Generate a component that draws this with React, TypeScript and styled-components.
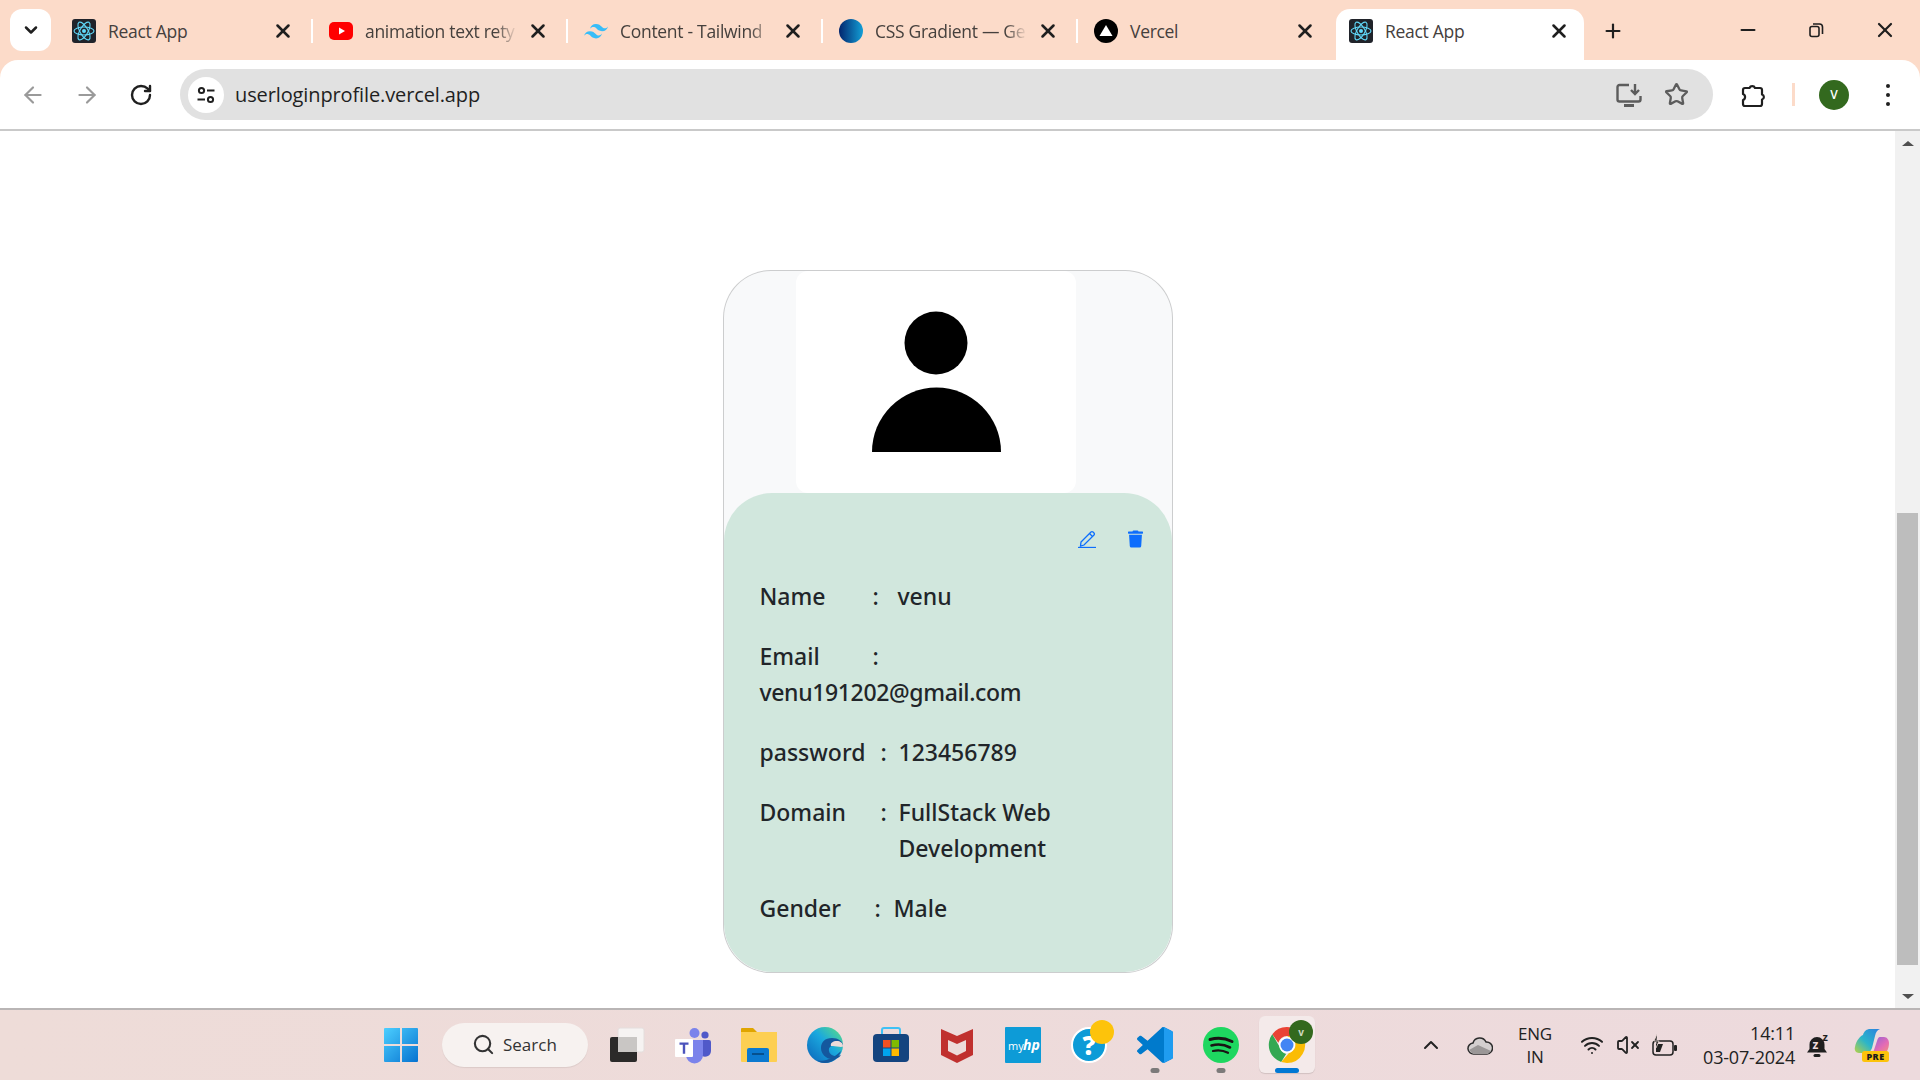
import React from "react";
import styled, { createGlobalStyle } from "styled-components";
import { ArrowLeft, ArrowRight, RotateCw, Star, Plus, Minus, X, Search, ChevronUp, ChevronDown, VolumeX, Wifi } from "lucide-react";
import { FaTrash } from "react-icons/fa";

const Global = createGlobalStyle`
  html, body { margin: 0; padding: 0; background: #fff; }
  * { box-sizing: border-box; }
  #root { width: 1920px; height: 1080px; overflow: hidden; }
`;
const UI = `"Open Sans", "Noto Sans", sans-serif`;

const Screen = styled.div`
  width: 1920px; height: 1080px; display: flex; flex-direction: column; font-family: ${UI}; color: #212529; background: #fcdbc9;
`;
const TabStrip = styled.div`
  height: 60px; display: flex; align-items: flex-end; padding-left: 10px; flex: none;
`;
const TabSwitcher = styled.div`
  width: 41px; height: 42px; background: #fff; border-radius: 12px; display: flex; align-items: center; justify-content: center; margin-bottom: 9px; margin-right: 6px; color: #1f1f1f; flex: none;
`;
const Tab = styled.div<{ $active?: boolean; $w?: number }>`
  width: ${p => p.$w ?? 255}px; height: 51px; flex: none; display: flex; align-items: center;
  padding: ${p => (p.$active ? "0 14px 8px 13px" : "0 1px 8px 15px")};
  background: ${p => (p.$active ? "#fff" : "transparent")};
  border-radius: ${p => (p.$active ? "14px 14px 0 0" : "0")};
`;
const TabIcon = styled.svg`
  width: 24px; height: 24px; flex: none; margin-right: 12px;
`;
const TabTitle = styled.div<{ $fade?: boolean }>`
  flex: 1; min-width: 0; white-space: nowrap; font-size: 17.5px; letter-spacing: -0.3px; color: #45403d;
  ${p => p.$fade ? "-webkit-mask-image: linear-gradient(90deg, #000 86%, transparent 100%); mask-image: linear-gradient(90deg, #000 86%, transparent 100%);" : ""}
`;
const TabClose = styled(X)`
  width: 22px; height: 22px; margin-left: 10px; flex: none; color: #1f1f1f; stroke-width: 2.8;
`;
const TabSep = styled.div<{ $hide?: boolean }>`
  width: 2px; height: 24px; margin-left: 17px; flex: none; background: ${p => (p.$hide ? "transparent" : "#fff")};
`;
const NewTab = styled(Plus)`
  width: 22px; height: 22px; margin: 0 0 18px 18px; color: #1f1f1f; stroke-width: 2.4; flex: none;
`;
const WindowControls = styled.div`
  margin-left: auto; display: flex; align-self: flex-start; height: 60px; align-items: center; padding: 0 23px 0 0; gap: 49px;
`;
const Toolbar = styled.div`
  height: 71px; flex: none; background: #fff; border-bottom: 2px solid #c9c9c9; border-radius: 18px 18px 0 0; display: flex; align-items: flex-start; padding: 9px 0 0 20px;
`;
const NavBtn = styled.div<{ $mr: number; $c: string }>`
  width: 26px; height: 51px; flex: none; margin-right: ${p => p.$mr}px; display: flex; align-items: center; justify-content: center; color: ${p => p.$c};
`;
const Omnibox = styled.div`
  width: 1533px; height: 51px; flex: none; background: #e1e1e1; border-radius: 26px; display: flex; align-items: center; padding: 0 24px 0 8px;
`;
const SiteInfo = styled.div`
  width: 36px; height: 36px; border-radius: 50%; background: #fff; display: flex; align-items: center; justify-content: center; flex: none;
`;
const Url = styled.div`
  margin-left: 11px; font-size: 20px; letter-spacing: -0.12px; color: #1f1f1f; flex: 1;
`;
const OmniIcons = styled.div`
  display: flex; align-items: center; gap: 22px; color: #5c5c5c;
`;
const ToolbarEnd = styled.div`
  display: flex; align-items: center; height: 51px; margin-left: 27px;
`;
const VSep = styled.div`
  width: 3px; height: 23px; background: #fcdbc9; margin: 0 24px 0 26px;
`;
const Avatar = styled.div`
  width: 30px; height: 30px; border-radius: 50%; background: #33691e; color: #fff; font-size: 12px; font-weight: 600; display: flex; align-items: center; justify-content: center; margin-right: 36px;
`;
const Viewport = styled.div`
  flex: 1; min-height: 0; display: flex; background: #fff;
`;
const Page = styled.main`
  flex: 1; display: flex; justify-content: center; align-items: flex-start; padding-top: 139px;
`;
const Card = styled.section`
  width: 450px; height: 703px; background: #f8f9fa; border: 1px solid rgba(0,0,0,.175); border-radius: 48px; display: flex; flex-direction: column; overflow: hidden; flex: none;
`;
const Photo = styled.div`
  width: 280px; height: 222px; flex: none; margin-left: 72px; background: #fff; border-radius: 12px;
`;
const PhotoSvg = styled.svg`
  display: block; width: 280px; height: 222px;
`;
const CardBody = styled.div`
  flex: 1; background: #d1e7dd; border-radius: 48px; padding: 37px 29px 0 36px; font-family: "Noto Sans", "Open Sans", sans-serif; font-size: 23px; font-weight: 500; line-height: 36px;
`;
const Actions = styled.div`
  display: flex; justify-content: flex-end; align-items: center; gap: 32px; height: 18px; margin-bottom: 30px; color: #0d6efd;
`;
const PencilSvg = styled.svg`
  width: 18px; height: 18px;
`;
const Trash = styled(FaTrash)`
  width: 15px; height: 18px;
`;
const Row = styled.div<{ $wrap?: boolean }>`
  display: flex; flex-wrap: ${p => (p.$wrap ? "wrap" : "nowrap")}; margin-bottom: 24px;
`;
const Label = styled.span<{ $w: number }>`
  width: ${p => p.$w}px; flex: none;
`;
const Colon = styled.span<{ $w: number }>`
  width: ${p => p.$w}px; flex: none;
`;
const Value = styled.span<{ $tight?: boolean }>`
  flex: 0 1 auto; min-width: 0; letter-spacing: ${p => (p.$tight ? "-0.36px" : "0")};
`;
const Scrollbar = styled.aside`
  width: 25px; flex: none; background: #f1f1f1; display: flex; flex-direction: column; align-items: center;
`;
const Arrow = styled.div<{ $down?: boolean }>`
  height: 24px; flex: none; display: flex; align-items: center; justify-content: center;
  &::before { content: ""; border-left: 6px solid transparent; border-right: 6px solid transparent;
    ${p => (p.$down ? "border-top: 5px solid #505050;" : "border-bottom: 5px solid #505050;")} }
`;
const ScrollSpace = styled.div`
  flex: 1;
`;
const Thumb = styled.div`
  width: 21px; height: 452px; background: #bdbdbd; flex: none; margin-bottom: 19px;
`;
const Taskbar = styled.footer`
  height: 72px; flex: none; border-top: 2px solid #b9b5b5; background: linear-gradient(90deg, #eedcd8, #eddadd); display: flex; align-items: center; padding: 0 0 1px 373px; color: #222;
`;
const Slot = styled.div<{ $active?: boolean; $mr?: number }>`
  position: relative; width: 56px; height: 57px; flex: none; margin-right: ${p => p.$mr ?? 10}px; display: flex; align-items: center; justify-content: center; border-radius: 6px;
  ${p => (p.$active ? "background: #f4eaea; box-shadow: 0 1px 1px rgba(0,0,0,.12);" : "")}
`;
const Running = styled.span<{ $active?: boolean }>`
  position: absolute; bottom: 0; left: 50%; transform: translateX(-50%); height: 5px; border-radius: 3px;
  width: ${p => (p.$active ? 24 : 9)}px; background: ${p => (p.$active ? "#0078d4" : "#7c7a7a")};
`;
const AppSvg = styled.svg`
  width: 36px; height: 36px; display: block; overflow: visible;
`;
const SearchPill = styled.div`
  width: 146px; height: 44px; flex: none; margin-right: 11px; border-radius: 22px; background: #f7f2f0; box-shadow: 0 1px 1px rgba(0,0,0,.08); display: flex; align-items: center; padding-left: 30px; gap: 8px; font-size: 17px; color: #333;
`;
const Tray = styled.div`
  margin-left: auto; display: flex; align-items: center; height: 100%;
`;
const TrayIcon = styled.div<{ $ml: number }>`
  margin-left: ${p => p.$ml}px; display: flex; align-items: center; color: #222; flex: none;
`;
const Lang = styled.div`
  margin-left: 17px; width: 50px; text-align: center; font-size: 17px; line-height: 23px; flex: none; letter-spacing: -0.2px;
`;
const Clock = styled.div`
  width: 117px; text-align: right; font-size: 18px; line-height: 24px; flex: none; letter-spacing: -0.2px;
`;

const ReactIcon = () => (
  <TabIcon viewBox="0 0 24 24">
    <rect width="24" height="24" rx="3" fill="#20232a" />
    <g fill="none" stroke="#61dafb" strokeWidth="1.1">
      <ellipse cx="12" cy="12" rx="10" ry="4" />
      <ellipse cx="12" cy="12" rx="10" ry="4" transform="rotate(60 12 12)" />
      <ellipse cx="12" cy="12" rx="10" ry="4" transform="rotate(120 12 12)" />
    </g>
    <circle cx="12" cy="12" r="2" fill="#61dafb" />
  </TabIcon>
);
const YoutubeIcon = () => (
  <TabIcon viewBox="0 0 24 24">
    <rect y="3" width="24" height="18" rx="5" fill="#f00" />
    <path d="M10 8.5v7l6-3.5z" fill="#fff" />
  </TabIcon>
);
const TailwindIcon = () => (
  <TabIcon viewBox="0 0 24 24">
    <path fill="#38bdf8" d="M12 5c-3.2 0-5.2 1.6-6 4.8 1.2-1.6 2.6-2.2 4.2-1.8.9.2 1.6.9 2.3 1.6 1.2 1.2 2.5 2.6 5.5 2.6 3.2 0 5.2-1.6 6-4.8-1.2 1.6-2.6 2.2-4.2 1.8-.9-.2-1.6-.9-2.3-1.6C16.3 6.4 15 5 12 5zM6 12.2c-3.2 0-5.2 1.6-6 4.8 1.2-1.6 2.6-2.2 4.2-1.8.9.2 1.6.9 2.3 1.6C7.7 18 9 19.4 12 19.4c3.2 0 5.2-1.6 6-4.8-1.2 1.6-2.6 2.2-4.2 1.8-.9-.2-1.6-.9-2.3-1.6-1.2-1.2-2.5-2.6-5.5-2.6z" />
  </TabIcon>
);
const GradientIcon = () => (
  <TabIcon viewBox="0 0 24 24">
    <defs>
      <linearGradient id="cssg" x1="0" x2="1" y1="0" y2="0">
        <stop offset="0" stopColor="#02256e" />
        <stop offset="1" stopColor="#139fd6" />
      </linearGradient>
    </defs>
    <circle cx="12" cy="12" r="12" fill="url(#cssg)" />
  </TabIcon>
);
const VercelIcon = () => (
  <TabIcon viewBox="0 0 24 24">
    <circle cx="12" cy="12" r="12" fill="#000" />
    <path d="M12 6l6.5 11h-13z" fill="#fff" />
  </TabIcon>
);

const RestoreIcon = () => (
  <svg width="16" height="16" viewBox="0 0 16 16" fill="none" stroke="#1f1f1f" strokeWidth="1.6">
    <rect x="2" y="4.5" width="9" height="10" rx="2" />
    <path d="M5 2h6.5a3 3 0 0 1 3 3v7" />
  </svg>
);
const TuneIcon = () => (
  <svg width="20" height="20" viewBox="0 0 20 20" fill="none" stroke="#1f1f1f" strokeWidth="2">
    <circle cx="5.5" cy="5.5" r="2.6" />
    <path d="M11 5.5h7.500M1.500 14.500h7.500" />
    <circle cx="14.5" cy="14.5" r="2.6" />
  </svg>
);
const InstallIcon = () => (
  <svg width="26" height="24" viewBox="0 0 26 24" fill="none" stroke="#5c5c5c" strokeWidth="2.4">
    <path d="M13 2H3.500A2 2 0 0 0 1.500 4v12.500a2 2 0 0 0 2 2h19a2 2 0 0 0 2-2V13" />
    <path d="M8 22.500h10" strokeWidth="3" />
    <path d="M19 1v9.500M15 7l4 4 4-4" />
  </svg>
);
const ExtensionIcon = () => (
  <svg width="26" height="26" viewBox="0 0 26 26" fill="none" stroke="#1f1f1f" strokeWidth="2.2" strokeLinejoin="round">
    <path d="M5 6h4.500a3 3 0 0 1 5.500 0h5a2 2 0 0 1 2 2v4.500a2.600 2.600 0 0 1 0 5V22a2 2 0 0 1-2 2H5a2 2 0 0 1-2-2v-4a3.200 3.200 0 0 0 0-6V8a2 2 0 0 1 2-2z" />
  </svg>
);
const MenuDots = () => (
  <svg width="6" height="24" viewBox="0 0 6 24" fill="#1f1f1f">
    <circle cx="3" cy="3" r="2" /><circle cx="3" cy="12" r="2" /><circle cx="3" cy="21" r="2" />
  </svg>
);

const Win = () => (
  <AppSvg viewBox="0 0 36 36">
    <defs>
      <linearGradient id="w" x1="0" y1="0" x2="1" y2="1"><stop offset="0" stopColor="#4ccfff" /><stop offset="1" stopColor="#0672d0" /></linearGradient>
    </defs>
    <path fill="url(#w)" d="M1 2a1 1 0 0 1 1-1h15v16H1zM19 1h15a1 1 0 0 1 1 1v15H19zM1 19h16v16H2a1 1 0 0 1-1-1zM19 19h16v15a1 1 0 0 1-1 1H19z" />
  </AppSvg>
);
const TaskView = () => (
  <AppSvg viewBox="0 0 36 36">
    <rect x="9" y="1" width="26" height="24" rx="2" fill="#f6f3f2" stroke="#e4dedd" />
    <rect x="1" y="10" width="27" height="25" rx="2" fill="#2b2a29" />
    <rect x="9" y="10" width="19" height="15" fill="#c9c6c4" />
  </AppSvg>
);
const Teams = () => (
  <AppSvg viewBox="0 0 36 36">
    <circle cx="30" cy="8" r="3.6" fill="#5059c9" />
    <path d="M24 13h10a2 2 0 0 1 2 2v9a6 6 0 0 1-9 5z" fill="#5059c9" />
    <circle cx="19.5" cy="6" r="5" fill="#7b83eb" />
    <path d="M11 13h17v15a8.500 8.500 0 0 1-17 0z" fill="#7b83eb" />
    <rect y="12" width="18" height="18" rx="1" fill="#fff" />
    <path d="M4.500 15.500h9v2.300h-3.300v9H7.800v-9H4.500z" fill="#4b53bc" />
  </AppSvg>
);
const Files = () => (
  <AppSvg viewBox="0 0 36 36">
    <path d="M0 2a1 1 0 0 1 1-1h11l4 4h19a1 1 0 0 1 1 1v6H0z" fill="#e0a500" />
    <path d="M0 5h36v29a1 1 0 0 1-1 1H1a1 1 0 0 1-1-1z" fill="#fdcf52" />
    <path d="M6 35v-12a2 2 0 0 1 2-2h18a2 2 0 0 1 2 2v12z" fill="#0b79d0" />
    <rect x="11" y="26" width="12" height="2" fill="#06508e" />
  </AppSvg>
);
const Edge = () => (
  <AppSvg viewBox="0 0 36 36">
    <defs>
      <linearGradient id="e1" x1="0" y1="1" x2="1" y2="0"><stop offset="0" stopColor="#0b62b8" /><stop offset=".55" stopColor="#1aa8de" /><stop offset="1" stopColor="#5fe07f" /></linearGradient>
    </defs>
    <circle cx="18" cy="18" r="18" fill="url(#e1)" />
    <path d="M34 24c-2 7-9 12-16 12-4 0-6-1-8-3 2 1 4 1 7 .5 6-1 11-4 17-9.500z" fill="#14589e" />
    <path d="M36 19c0-5-5-8-11-8-7 0-11 4-11 10 0 6 5 11 11 11 4 0 7-1 9-4-5 2-11 1-12-4-.5-3 1-5 4-5z" fill="#14589e" />
    <path d="M26 19c3 0 10 2 10 0 0-3-3-5-6-5-4 0-7 2-6 5z" fill="#eddbd9" />
  </AppSvg>
);
const Store = () => (
  <AppSvg viewBox="0 0 36 36">
    <path d="M9 9V3a2 2 0 0 1 2-2h14a2 2 0 0 1 2 2v6" fill="none" stroke="#3fc1f5" strokeWidth="2" />
    <rect y="7" width="36" height="28" rx="4" fill="#14447f" />
    <rect x="10" y="13" width="7.500" height="7.500" fill="#f25022" />
    <rect x="18.500" y="13" width="7.500" height="7.500" fill="#7fba00" />
    <rect x="10" y="21.500" width="7.500" height="7.500" fill="#00a4ef" />
    <rect x="18.500" y="21.500" width="7.500" height="7.500" fill="#ffb900" />
  </AppSvg>
);
const McAfee = () => (
  <AppSvg viewBox="0 0 36 36">
    <path d="M2 2l16 7 16-7v26l-16 8-16-8z" fill="#c0302e" />
    <path d="M9 13l9 4 9-4v11l-9 4.500-9-4.500z" fill="#eddbd9" />
  </AppSvg>
);
const MyHP = () => (
  <AppSvg viewBox="0 0 36 36">
    <rect width="36" height="36" rx="1" fill="#0d9bd7" />
    <text x="3" y="23" fontFamily="Open Sans, sans-serif" fontSize="11" fill="#fff">my</text>
    <text x="18" y="23" fontFamily="Open Sans, sans-serif" fontStyle="italic" fontWeight="700" fontSize="14" fill="#fff">hp</text>
  </AppSvg>
);
const Help = () => (
  <AppSvg viewBox="0 0 36 36">
    <circle cx="18" cy="18" r="17" fill="#0d9bd7" stroke="#fff" strokeWidth="2" />
    <text x="18" y="28" textAnchor="middle" fontFamily="Open Sans, sans-serif" fontWeight="800" fontSize="26" fill="#fff">?</text>
    <circle cx="31" cy="5" r="12" fill="#fdc30b" />
  </AppSvg>
);
const VSCode = () => (
  <AppSvg viewBox="0 0 100 100">
    <path fill="#007acc" d="M70.9 99.3c1.6.6 3.4.6 5-.2l20.6-9.9c2.1-1 3.5-3.200 3.500-5.600V16.400c0-2.400-1.400-4.600-3.500-5.600L75.900.9c-2.100-1-4.600-.8-6.400.5-.3.200-.5.400-.7.700L29.400 38 12.200 25c-1.600-1.200-3.800-1.100-5.300.2l-5.500 5c-1.800 1.700-1.800 4.500 0 6.200L16.200 50 1.400 63.600c-1.800 1.600-1.800 4.500 0 6.100l5.500 5c1.500 1.400 3.700 1.500 5.300.3L29.400 62l39.400 35.900c.6.600 1.300 1.100 2.100 1.400zM75 27.300L45.100 50 75 72.700z" />
    <path fill="#1f9cf0" d="M75.800.9l20.700 9.900c2.100 1 3.500 3.200 3.500 5.600v67.200c0 2.400-1.400 4.600-3.500 5.600l-20.600 9.900c-2.400 1.200-5.300.7-7.100-1.200 2.300 2.300 6.200.7 6.200-2.600V4.700c0-3.300-3.900-4.900-6.200-2.600C70.600.2 73.500-.3 75.800.9z" />
  </AppSvg>
);
const Spotify = () => (
  <AppSvg viewBox="0 0 36 36">
    <circle cx="18" cy="18" r="18" fill="#1ed760" />
    <g fill="none" stroke="#191414" strokeLinecap="round">
      <path d="M7 12.500c7-2 15-1.500 22 2" strokeWidth="3" />
      <path d="M8.500 18.500c6-1.600 13-1 18.500 2" strokeWidth="2.600" />
      <path d="M10 24c5-1.200 10-.8 15 1.800" strokeWidth="2.200" />
    </g>
  </AppSvg>
);
const Chrome = () => (
  <AppSvg viewBox="0 0 36 36">
    <path d="M18 0a18 18 0 0 1 15.600 9H18a9 9 0 0 0-8.700 6.800L3.300 7.200A18 18 0 0 1 18 0z" fill="#ea4335" />
    <path d="M3.300 7.200l7.800 13.500a8 8 0 0 0 6 6.200L12.200 35A18 18 0 0 1 3.300 7.200z" fill="#34a853" />
    <path d="M33.600 9a18 18 0 0 1-15.600 27l-5.800-1L20 26a8.500 8.500 0 0 0 5-13l-7-4z" fill="#fbbc04" />
    <circle cx="18" cy="18" r="8" fill="#fff" />
    <circle cx="18" cy="18" r="6.500" fill="#4285f4" />
    <circle cx="32" cy="5" r="12" fill="#33691e" />
    <text x="32" y="9" textAnchor="middle" fontFamily="Open Sans, sans-serif" fontWeight="700" fontSize="10" fill="#cfd8c0">v</text>
  </AppSvg>
);
const CloudIcon = () => (
  <svg width="26" height="22" viewBox="0 0 26 22">
    <path d="M7 20a5.500 5.500 0 0 1-1-11 7 7 0 0 1 13-1 5.500 5.500 0 0 1 1 12z" fill="#d4cfcf" stroke="#2b2b2b" strokeWidth="1.500" />
    <path d="M2 16l9-5 13 6-3 3H6z" fill="#9b9797" />
  </svg>
);
const BatteryIcon = () => (
  <svg width="26" height="24" viewBox="0 0 26 24" fill="none" stroke="#222" strokeWidth="1.500">
    <rect x="1" y="8" width="20" height="14" rx="3" />
    <rect x="22" y="12" width="3" height="6" rx="1" fill="#222" stroke="none" />
    <path d="M4 19v-8h7l-3 8z" fill="#222" stroke="none" />
    <path d="M5 1L2 8h5l-3 7" fill="#222" stroke="#eedcd8" strokeWidth=".8" />
  </svg>
);
const BellIcon = () => (
  <svg width="24" height="26" viewBox="0 0 24 26">
    <path d="M10 5a7.500 7.500 0 0 0-7.500 7.500V17L0 20.500h20L17.500 17v-4.500A7.500 7.500 0 0 0 10 5z" fill="#1f1f1f" />
    <rect x="6.500" y="22" width="7" height="3" rx="1.500" fill="#1f1f1f" />
    <text x="5.500" y="17" fontFamily="Open Sans, sans-serif" fontSize="12" fontWeight="700" fill="#eddbdc">z</text>
    <text x="15.500" y="9" fontFamily="Open Sans, sans-serif" fontSize="11" fontWeight="700" fill="#1f1f1f">z</text>
  </svg>
);
const Copilot = () => (
  <svg width="36" height="36" viewBox="0 0 36 36">
    <defs>
      <linearGradient id="c1" x1="0" y1="1" x2="1" y2="0"><stop offset="0" stopColor="#b8d244" /><stop offset=".45" stopColor="#2bb5c9" /><stop offset="1" stopColor="#2b7fe0" /></linearGradient>
      <linearGradient id="c2" x1="0" y1="0" x2="1" y2="1"><stop offset="0" stopColor="#7d5fe0" /><stop offset=".6" stopColor="#e46bb5" /><stop offset="1" stopColor="#f39a6b" /></linearGradient>
    </defs>
    <path d="M9 8c1-4 4-6 7-6h10c-3 1-4 3-5 7l-3 12c-1 3-3 5-6 5H5c-3 0-5-3-4-6 1-6 5-11 8-12z" fill="url(#c1)" />
    <path d="M26 10h4c3 0 5 3 5 6 0 6-3 12-8 12H14c3 0 5-2 6-5l3-9c.5-2 1.500-4 3-4z" fill="url(#c2)" />
    <rect x="8" y="24" width="27" height="11" rx="2.500" fill="#fcc30b" />
    <text x="21.500" y="33" textAnchor="middle" fontFamily="Open Sans, sans-serif" fontWeight="800" fontSize="9" letterSpacing=".5" fill="#1c1c1c">PRE</text>
  </svg>
);

export default function App() {
  return (
    <Screen>
      <Global />
      <TabStrip>
        <TabSwitcher><ChevronDown size={20} strokeWidth={3} /></TabSwitcher>
        <Tab $w={257}><ReactIcon /><TabTitle>React App</TabTitle><TabClose /><TabSep /></Tab>
        <Tab><YoutubeIcon /><TabTitle $fade>animation text rety</TabTitle><TabClose /><TabSep /></Tab>
        <Tab><TailwindIcon /><TabTitle $fade>Content - Tailwind</TabTitle><TabClose /><TabSep /></Tab>
        <Tab><GradientIcon /><TabTitle $fade>CSS Gradient — Ge</TabTitle><TabClose /><TabSep /></Tab>
        <Tab $w={257}><VercelIcon /><TabTitle>Vercel</TabTitle><TabClose /><TabSep $hide /></Tab>
        <Tab $active $w={248}><ReactIcon /><TabTitle>React App</TabTitle><TabClose /></Tab>
        <NewTab />
        <WindowControls>
          <Minus size={22} strokeWidth={2.4} color="#1f1f1f" />
          <RestoreIcon />
          <X size={24} strokeWidth={2.2} color="#1f1f1f" />
        </WindowControls>
      </TabStrip>
      <Toolbar>
        <NavBtn $mr={28} $c="#9a9a9a"><ArrowLeft size={28} strokeWidth={2} /></NavBtn>
        <NavBtn $mr={28} $c="#9a9a9a"><ArrowRight size={28} strokeWidth={2} /></NavBtn>
        <NavBtn $mr={26} $c="#1f1f1f"><RotateCw size={24} strokeWidth={2.4} /></NavBtn>
        <Omnibox>
          <SiteInfo><TuneIcon /></SiteInfo>
          <Url>userloginprofile.vercel.app</Url>
          <OmniIcons><InstallIcon /><Star size={25} strokeWidth={2.2} /></OmniIcons>
        </Omnibox>
        <ToolbarEnd>
          <ExtensionIcon />
          <VSep />
          <Avatar>V</Avatar>
          <MenuDots />
        </ToolbarEnd>
      </Toolbar>
      <Viewport>
        <Page>
          <Card>
            <Photo>
              <PhotoSvg viewBox="0 0 280 222">
                <circle cx="140" cy="72" r="31.5" fill="#000" />
                <path d="M76 181a64.500 64.500 0 0 1 129 0z" fill="#000" />
              </PhotoSvg>
            </Photo>
            <CardBody>
              <Actions>
                <PencilSvg viewBox="0 0 18 18" fill="none" stroke="currentColor" strokeWidth="1.3">
                  <path d="M3 12L13 2a1.400 1.400 0 0 1 2 0l1 1a1.400 1.400 0 0 1 0 2L6 15l-3.500 1z" />
                  <path d="M11.500 3.500l3 3" />
                  <path d="M0 17.500h18" />
                </PencilSvg>
                <Trash />
              </Actions>
              <Row><Label $w={113}>Name</Label><Colon $w={25}>:</Colon><Value>venu</Value></Row>
              <Row $wrap><Label $w={113}>Email</Label><Colon $w={200}>:</Colon><Value $tight>venu191202@gmail.com</Value></Row>
              <Row><Label $w={121}>password</Label><Colon $w={18}>:</Colon><Value>123456789</Value></Row>
              <Row><Label $w={121}>Domain</Label><Colon $w={18}>:</Colon><Value>FullStack Web Development</Value></Row>
              <Row><Label $w={115}>Gender</Label><Colon $w={19}>:</Colon><Value>Male</Value></Row>
            </CardBody>
          </Card>
        </Page>
        <Scrollbar>
          <Arrow />
          <ScrollSpace />
          <Thumb />
          <Arrow $down />
        </Scrollbar>
      </Viewport>
      <Taskbar>
        <Slot $mr={13}><Win /></Slot>
        <SearchPill><Search size={23} strokeWidth={2.2} />Search</SearchPill>
        <Slot><TaskView /></Slot>
        <Slot><Teams /></Slot>
        <Slot><Files /></Slot>
        <Slot><Edge /></Slot>
        <Slot><Store /></Slot>
        <Slot><McAfee /></Slot>
        <Slot><MyHP /></Slot>
        <Slot><Help /></Slot>
        <Slot><VSCode /><Running /></Slot>
        <Slot><Spotify /><Running /></Slot>
        <Slot $active><Chrome /><Running $active /></Slot>
        <Tray>
          <TrayIcon $ml={0}><ChevronUp size={24} strokeWidth={2} /></TrayIcon>
          <TrayIcon $ml={24}><CloudIcon /></TrayIcon>
          <Lang>ENG<br />IN</Lang>
          <TrayIcon $ml={20}><Wifi size={24} strokeWidth={2} /></TrayIcon>
          <TrayIcon $ml={12}><VolumeX size={24} strokeWidth={1.8} /></TrayIcon>
          <TrayIcon $ml={12}><BatteryIcon /></TrayIcon>
          <Clock>14:11<br />03-07-2024</Clock>
          <TrayIcon $ml={12}><BellIcon /></TrayIcon>
          <TrayIcon $ml={23}><Copilot /></TrayIcon>
          <TrayIcon $ml={30} />
        </Tray>
      </Taskbar>
    </Screen>
  );
}
